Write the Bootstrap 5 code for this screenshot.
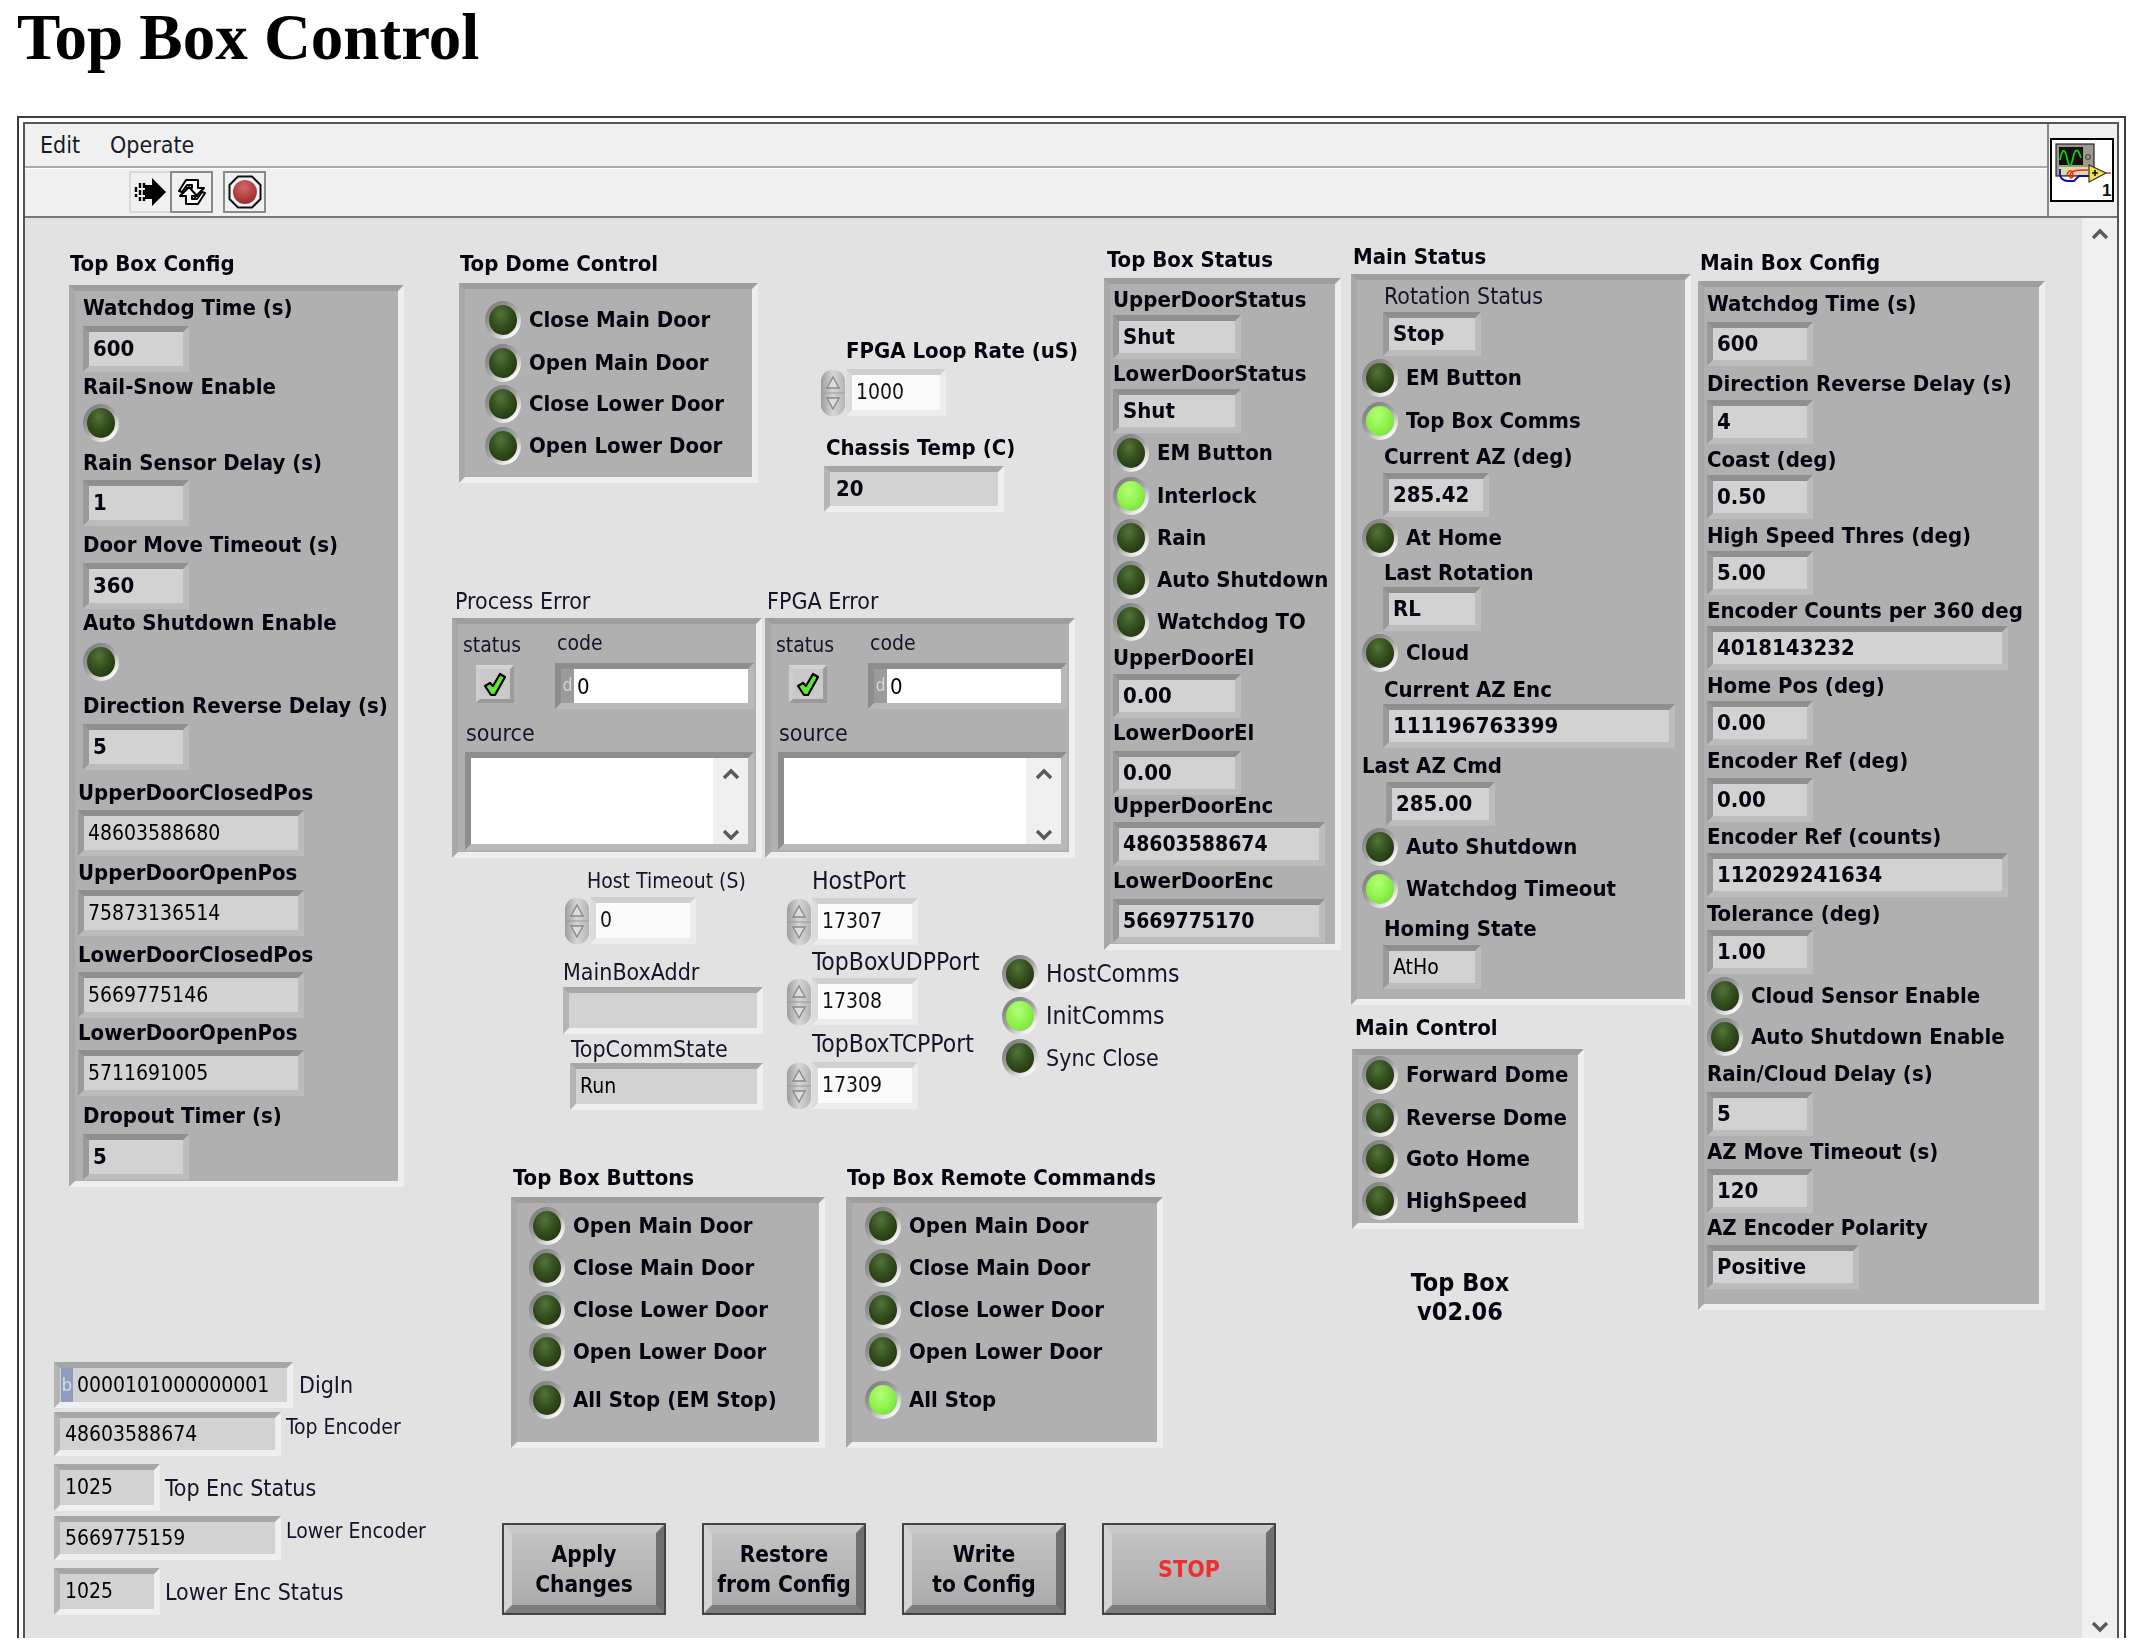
<!DOCTYPE html>
<html lang="en">
<head>
<meta charset="utf-8">
<title>Top Box Control</title>
<link rel="stylesheet" href="https://cdn.jsdelivr.net/npm/bootstrap@5.3.0/dist/css/bootstrap.min.css">
<style>
body{background:#fff;margin:0;width:2150px;height:1646px;overflow:hidden;font-family:"DejaVu Sans Condensed","DejaVu Sans",sans-serif;color:#000}
.page-title{font-family:"Liberation Serif",serif;font-weight:700;font-size:65px;line-height:70px;margin:0;padding:2px 0 0 17px;height:116px;color:#000}
.vi-frame{margin-left:17px;width:2109px;height:1522px;border:2px solid #3c3c3c;border-bottom:0;padding:4px 5px 0 4px}
.vi-inner{border:2px solid #555;border-bottom:0;height:100%;display:flex;flex-direction:column}
.vi-head{height:94px;flex:none;border-bottom:2px solid #777;background:#f0f0f0}
.vi-menu{height:44px;border-bottom:2px solid #aaa;box-shadow:0 1px 0 #fff;padding-left:15px;font-size:23px;gap:30px;align-items:center}
.vi-menu .nav-link{color:#1a1a2a;padding:0;line-height:26px}
.vi-tools{padding:3px 0 0 104px}
.tool-btn{width:43px;height:42px;padding:0;border:2px solid #8a8a8a;border-radius:0;background:#f0f0f0;display:flex;align-items:center;justify-content:center}
.tool-run{border-color:#d8d8d8;border-right:0;width:41px}
.tool-stop{margin-left:10px}
.vi-icon-cell{width:70px;flex:none;border-left:2px solid #888;padding:14px 0 0 1px}
.vi-icon{display:block;width:64px;height:64px;background:#fff;border:2px solid #000}
.canvas{position:relative;flex:1 1 auto;background:#e2e2e2;filter:blur(.45px)}
.vi-scroll{width:35px;flex:none;background:#f0f0f0;padding:10px 0 5px;align-items:center}
.obj{position:absolute}
.lb,.lr{height:26px;line-height:26px;white-space:nowrap}
.lb{font-weight:700;color:#05050f;font-size:22px}
.lr{font-weight:400;color:#14142a;font-size:23px}
.lr-x{font-size:24.5px}
.lr-s{font-size:21px}
.lp{border-style:solid;border-width:6px;border-color:#9e9e9e #eee #eee #a8a8a8;background:#b0b0b0;box-sizing:border-box}
.fld{height:44px;box-sizing:border-box;border-style:solid;border-width:6px;border-color:#8f8f8f #bcbcbc #bcbcbc #9a9a9a;background:#d2d2d2;display:flex;align-items:center;padding-left:4px;font-size:21px;line-height:1;white-space:nowrap;overflow:hidden}
.fld.on-bg{border-color:#a6a6a6 #efefef #efefef #b4b4b4}
.fb{font-weight:700;font-size:22px;color:#05050f}
.fn{font-size:21px}
.w98{width:98px}.w106{width:106px}.w109{width:109px}.w128{width:128px}.w152{width:152px}.w212{width:212px}.w226{width:226px}.w200{width:200px}.w193{width:193px}.w180{width:180px}.w239{width:239px}.w227{width:227px}.w292{width:292px}.w301{width:301px}
.tall{height:46px}.h47{height:47px}
.led{display:block;flex:none;width:36px;height:38px;border-radius:50%;border:4px solid transparent;background:radial-gradient(ellipse at 42% 30%,#54743a 0,#35521f 40%,#23360f 80%,#1c2a0e 100%) padding-box,linear-gradient(140deg,#858585 20%,#a5a5a5 50%,#fbfbfb 85%) border-box}
.led.lit{background:radial-gradient(ellipse at 42% 30%,#b4ff78 0,#8ef24a 50%,#6fd038 100%) padding-box,linear-gradient(140deg,#858585 20%,#a5a5a5 50%,#fbfbfb 85%) border-box}
.led-row{display:flex;align-items:center;gap:8px;height:38px}
.t0{margin-top:0}.t1{margin-top:1px}.t2{margin-top:2px}.t3{margin-top:3px}.t4{margin-top:4px}.t5{margin-top:5px}.t6{margin-top:6px}.t7{margin-top:7px}.t8{margin-top:8px}.t10{margin-top:10px}.t11{margin-top:11px}.t12{margin-top:12px}.tm2{margin-top:-2px}
.pos-tbc{left:44px;top:33px}.pan-tbc{width:335px;height:902px;padding-left:8px}
.tbc-wide{margin-left:-5px}
.pos-dome{left:434px;top:33px}.pan-dome{width:299px;height:200px;padding-left:20px}
.pos-tbs{left:1079px;top:29px}.pan-tbs{width:237px;height:672px;padding-left:3px}
.pos-ms{left:1326px;top:26px}.pan-ms{width:340px;height:731px;padding-left:5px}
.pos-mb{left:1673px;top:32px}.pan-mb{width:347px;height:1029px;padding-left:3px}
.pos-mc{left:1327px;top:797px}.pan-mc{width:232px;height:180px;padding-left:4px}
.pos-bt{left:486px;top:947px}.pos-rc{left:821px;top:947px}.pan-bt{width:314px;height:251px;padding-left:12px}.pan-rc{width:317px;height:251px;padding-left:13px}
.pos-pe{left:427px;top:370px}.pos-fe{left:740px;top:370px}.pan-err{width:310px;height:240px}
.pos-loop{left:795px;top:120px}.pos-chassis{left:799px;top:217px}.pos-host{left:539px;top:650px}.pos-ports{left:761px;top:650px}.pos-addr{left:538px;top:741px}.pos-comm{left:977px;top:737px}.pos-ver{left:1335px;top:1050px;width:200px}.pos-dig{left:29px;top:1144px}.pos-btns{left:477px;top:1305px}
.i21{margin-left:21px}.i22{margin-left:22px}.i24{margin-left:24px}.i26{margin-left:26px}.i23{margin-left:23px}.i7{margin-left:7px}.i8{margin-left:8px}.i1{margin-left:1px}.i2{margin-left:2px}.i3{margin-left:3px}.i5{margin-left:5px}.i13{margin-left:13px}
.pd{padding-left:6px}
.spin{display:block;flex:none;width:26px;height:48px}
.ctl{background:#fafafa;border-color:#cfcfcf #ececec #ececec #dcdcdc;color:#111;font-size:21px;width:106px;height:47px}
.ctl-wide{width:100px}
.err-col{width:97px;padding-left:5px}
.err-btn{width:38px;height:38px;border:4px solid;border-color:#d4d4d4 #9c9c9c #9a9a9a #cdcdcd;background:#c9c9c9;display:flex;align-items:center;justify-content:center}
.err-code{width:199px;height:46px;border-style:solid;border-width:6px;border-color:#8d8d8d #b9b9b9 #b9b9b9 #8d8d8d;display:flex;background:#fff;box-sizing:border-box;font-size:22px;align-items:center}
.radix{width:13px;height:100%;background:#9b9b9b;color:#d6d6d6;font-size:17px;display:flex;align-items:center;justify-content:center;margin-right:3px}
.err-src{width:289px;height:98px;border-style:solid;border-width:6px;border-color:#8d8d8d #b9b9b9 #b9b9b9 #8d8d8d;background:#fff;display:flex;justify-content:flex-end;box-sizing:border-box}
.err-bar{width:35px;background:#f0f0f0;padding:10px 0 3px;align-items:center}
.hl-b{background:#8c9dbf;color:#d8dde8;width:12px;height:100%;display:flex;align-items:center;justify-content:center;font-size:18px;margin-right:4px;margin-left:-4px}
.dig .fld{padding-left:5px}
.fh48{height:47px}
.lv-btn{--bs-btn-padding-x:0;--bs-btn-padding-y:0;height:92px;width:164px;border-radius:0;outline:2px solid #444;outline-offset:-2px;border:10px solid;border-color:#c9c9c9 #6f6f6f #7c7c7c #d3d3d3;background:linear-gradient(#c2c2c2,#acacac);font-family:inherit;font-weight:700;font-size:22.5px;line-height:30px;color:#05050f;display:flex;align-items:center;justify-content:center;text-align:center}
.lv-stop{width:174px;color:#ee2f2f;font-size:23px}
.gap-btns{gap:36px}
.ver-txt{font-weight:700;font-size:25px;line-height:29px;text-align:center;color:#05050f}
.sprite{position:absolute;width:0;height:0}
</style>
</head>
<body>
<svg class="sprite" aria-hidden="true">
<defs>
<linearGradient id="spg" x1="0" x2="1" y1="0" y2="0"><stop offset="0" stop-color="#9c9c9c"/><stop offset=".5" stop-color="#d6d6d6"/><stop offset="1" stop-color="#b4b4b4"/></linearGradient>
<symbol id="spinner" viewBox="0 0 26 48"><rect x="1" y="1" width="24" height="46" rx="11" fill="url(#spg)"/><path d="M1 24h24" stroke="#9a9a9a" stroke-width="1"/><path d="M13 8l6 11H7z" fill="#dcdcdc" stroke="#8a8a8a" stroke-width="1.4"/><path d="M13 40l6-11H7z" fill="#dcdcdc" stroke="#8a8a8a" stroke-width="1.4"/></symbol>
<symbol id="check" viewBox="0 0 24 26"><path d="M2 15l5-3 3 3 7-12 5 3-10 18H8z" fill="#5fe83a" stroke="#000" stroke-width="2.2" stroke-linejoin="round"/></symbol>
<symbol id="up" viewBox="0 0 18 12"><path d="M2 10l7-7 7 7" fill="none" stroke="#5a5a5a" stroke-width="3.4"/></symbol>
<symbol id="down" viewBox="0 0 18 12"><path d="M2 2l7 7 7-7" fill="none" stroke="#5a5a5a" stroke-width="3.4"/></symbol>
</defs>
</svg>

<h1 class="page-title">Top Box Control</h1>

<div class="vi-frame">
<div class="vi-inner">
  <div class="vi-head d-flex">
    <div class="flex-grow-1">
      <nav class="nav vi-menu"><a class="nav-link" href="#">Edit</a><a class="nav-link" href="#">Operate</a></nav>
      <div class="vi-tools d-flex">
        <button class="btn tool-btn tool-run" type="button" aria-label="Run"><svg width="33" height="30" viewBox="0 0 33 30"><path d="M2 10v10M6 6v18M10 6v18" stroke="#000" stroke-width="2.4" stroke-dasharray="5 2"/><path d="M11 8h7V1l14 14-14 14v-7h-7z" fill="#000"/></svg></button>
        <button class="btn tool-btn" type="button" aria-label="Run continuously"><svg width="34" height="32" viewBox="0 0 34 32"><path d="M4 15L11 4h12v8h6l-9 9-8-9h5V9h-5l-5 7z" fill="#fff" stroke="#000" stroke-width="2" stroke-linejoin="round"/><path d="M30 17l-7 11H11v-8H5l9-9 8 9h-5v3h5l5-7z" fill="#fff" stroke="#000" stroke-width="2" stroke-linejoin="round"/></svg></button>
        <button class="btn tool-btn tool-stop" type="button" aria-label="Abort"><svg width="34" height="34" viewBox="0 0 34 34"><defs><radialGradient id="stg" cx=".45" cy=".3" r=".8"><stop offset="0" stop-color="#d06a6a"/><stop offset=".6" stop-color="#b03c3c"/><stop offset="1" stop-color="#8c2626"/></radialGradient></defs><path d="M10 1.5h14l8.500 8.500v14l-8.500 8.500H10l-8.500-8.500V10z" fill="#f5f5f5" stroke="#111" stroke-width="2"/><circle cx="17" cy="17" r="12" fill="url(#stg)"/></svg></button>
      </div>
    </div>
    <div class="vi-icon-cell">
      <svg class="vi-icon" viewBox="0 0 60 60" role="img" aria-label="VI icon">
        <rect x="4" y="4" width="38" height="32" fill="#9b9b8c" stroke="#222" stroke-width="1.2"/>
        <rect x="7" y="7" width="24" height="18" fill="#111"/>
        <path d="M8 20c2-12 5-12 7-2s4 10 6 0 5-10 8 0" fill="none" stroke="#17c417" stroke-width="1.8"/>
        <circle cx="36" cy="17" r="2.4" fill="none" stroke="#554" stroke-width="1.2"/>
        <rect x="7" y="27" width="30" height="8" fill="#d9d9aa"/>
        <path d="M8 29v6q1 5 7 6h7l5-5h11" fill="none" stroke="#1010a8" stroke-width="1.8"/>
        <path d="M15 35c2-7 6-4 6 0s-4 4-3 0 4-5 18-5" fill="none" stroke="#ee2a1a" stroke-width="1.5"/>
        <path d="M37 25v17l17-9z" fill="#f0e442" stroke="#333" stroke-width="1.2"/>
        <path d="M40 33h6M43 30v6" stroke="#111" stroke-width="1.6"/>
        <path d="M54 33h5" stroke="#ee2a1a" stroke-width="1.5"/>
        <text x="50" y="56" font-family="Liberation Sans,sans-serif" font-size="17" font-weight="700" fill="#111">1</text>
      </svg>
    </div>
  </div>
  <div class="d-flex flex-grow-1">
    <div class="canvas">

      <div class="obj pos-tbc">
        <div class="lb i1">Top Box Config</div>
        <div class="lp pan-tbc t8">
          <div class="lb t4">Watchdog Time (s)</div>
          <div class="fld fb w106 tall t5">600</div>
          <div class="lb t2">Rail-Snow Enable</div>
          <span class="led t4"></span>
          <div class="lb t8">Rain Sensor Delay (s)</div>
          <div class="fld fb w106 tall t4">1</div>
          <div class="lb t6">Door Move Timeout (s)</div>
          <div class="fld fb w106 tall t5">360</div>
          <div class="lb t1">Auto Shutdown Enable</div>
          <span class="led t7"></span>
          <div class="lb t12">Direction Reverse Delay (s)</div>
          <div class="fld fb w106 tall t5">5</div>
          <div class="lb tbc-wide t10">UpperDoorClosedPos</div>
          <div class="fld w226 tall tbc-wide t4">48603588680</div>
          <div class="lb tbc-wide t4">UpperDoorOpenPos</div>
          <div class="fld w226 tall tbc-wide t4">75873136514</div>
          <div class="lb tbc-wide t6">LowerDoorClosedPos</div>
          <div class="fld w226 tall tbc-wide t4">5669775146</div>
          <div class="lb tbc-wide t2">LowerDoorOpenPos</div>
          <div class="fld w226 tall tbc-wide t4">5711691005</div>
          <div class="lb t7">Dropout Timer (s)</div>
          <div class="fld fb w106 tall t5">5</div>
        </div>
      </div>

      <div class="obj pos-dome">
        <div class="lb i1">Top Dome Control</div>
        <div class="lp pan-dome t6">
          <div class="led-row lb t12"><span class="led"></span>Close Main Door</div>
          <div class="led-row lb t5"><span class="led"></span>Open Main Door</div>
          <div class="led-row lb t3"><span class="led"></span>Close Lower Door</div>
          <div class="led-row lb t4"><span class="led"></span>Open Lower Door</div>
        </div>
      </div>

      <div class="obj pos-loop">
        <div class="lb i26">FPGA Loop Rate (uS)</div>
        <div class="d-flex t5"><svg class="spin"><use href="#spinner"/></svg><div class="fld ctl ctl-wide">1000</div></div>
      </div>

      <div class="obj pos-chassis">
        <div class="lb i2">Chassis Temp (C)</div>
        <div class="fld fb on-bg w180 tall t5 pd">20</div>
      </div>

      <div class="obj pos-pe">
        <div class="lr i3">Process Error</div>
        <div class="lp pan-err t4">
          <div class="d-flex">
            <div class="err-col">
              <div class="lr lr-s t8">status</div>
              <div class="err-btn i13 t7"><svg width="24" height="26"><use href="#check"/></svg></div>
            </div>
            <div>
              <div class="lr lr-s t6 i2">code</div>
              <div class="err-code t7"><span class="radix">d</span>0</div>
            </div>
          </div>
          <div class="lr i8 t11">source</div>
          <div class="err-src i7 t6"><div class="err-bar d-flex flex-column justify-content-between"><svg width="18" height="12"><use href="#up"/></svg><svg width="18" height="12"><use href="#down"/></svg></div></div>
        </div>
      </div>

      <div class="obj pos-fe">
        <div class="lr i2">FPGA Error</div>
        <div class="lp pan-err t4">
          <div class="d-flex">
            <div class="err-col">
              <div class="lr lr-s t8">status</div>
              <div class="err-btn i13 t7"><svg width="24" height="26"><use href="#check"/></svg></div>
            </div>
            <div>
              <div class="lr lr-s t6 i2">code</div>
              <div class="err-code t7"><span class="radix">d</span>0</div>
            </div>
          </div>
          <div class="lr i8 t11">source</div>
          <div class="err-src i7 t6"><div class="err-bar d-flex flex-column justify-content-between"><svg width="18" height="12"><use href="#up"/></svg><svg width="18" height="12"><use href="#down"/></svg></div></div>
        </div>
      </div>

      <div class="obj pos-host">
        <div class="lr lr-s i23">Host Timeout (S)</div>
        <div class="d-flex t3"><svg class="spin"><use href="#spinner"/></svg><div class="fld ctl">0</div></div>
      </div>

      <div class="obj pos-ports">
        <div class="lr lr-x i26">HostPort</div>
        <div class="d-flex t4"><svg class="spin"><use href="#spinner"/></svg><div class="fld ctl">17307</div></div>
        <div class="lr lr-x i26 t3">TopBoxUDPPort</div>
        <div class="d-flex t3"><svg class="spin"><use href="#spinner"/></svg><div class="fld ctl">17308</div></div>
        <div class="lr lr-x i26 t5">TopBoxTCPPort</div>
        <div class="d-flex t5"><svg class="spin"><use href="#spinner"/></svg><div class="fld ctl">17309</div></div>
      </div>

      <div class="obj pos-addr">
        <div class="lr">MainBoxAddr</div>
        <div class="fld on-bg w200 h47 t2"></div>
        <div class="lr i8 t2">TopCommState</div>
        <div class="fld on-bg w193 h47 t1 i7">Run</div>
      </div>

      <div class="obj pos-comm">
        <div class="led-row lr lr-x"><span class="led"></span>HostComms</div>
        <div class="led-row lr lr-x t4"><span class="led lit"></span>InitComms</div>
        <div class="led-row lr t4"><span class="led"></span>Sync Close</div>
      </div>

      <div class="obj pos-tbs">
        <div class="lb i3">Top Box Status</div>
        <div class="lp pan-tbs t5">
          <div class="lb t3">UpperDoorStatus</div>
          <div class="fld fb w128 t2">Shut</div>
          <div class="lb t2">LowerDoorStatus</div>
          <div class="fld fb w128 t2">Shut</div>
          <div class="led-row lb t1"><span class="led"></span>EM Button</div>
          <div class="led-row lb t5"><span class="led lit"></span>Interlock</div>
          <div class="led-row lb t4"><span class="led"></span>Rain</div>
          <div class="led-row lb t4"><span class="led"></span>Auto Shutdown</div>
          <div class="led-row lb t4"><span class="led"></span>Watchdog TO</div>
          <div class="lb t4">UpperDoorEl</div>
          <div class="fld fb w128 t3">0.00</div>
          <div class="lb t2">LowerDoorEl</div>
          <div class="fld fb w128 t5">0.00</div>
          <div class="lb tm2">UpperDoorEnc</div>
          <div class="fld fb fn w212 t3">48603588674</div>
          <div class="lb t2">LowerDoorEnc</div>
          <div class="fld fb fn w212 t5">5669775170</div>
        </div>
      </div>

      <div class="obj pos-ms">
        <div class="lb i2">Main Status</div>
        <div class="lp pan-ms t4">
          <div class="lr i22 t3">Rotation Status</div>
          <div class="fld fb w98 i21 t3">Stop</div>
          <div class="led-row lb t3"><span class="led"></span>EM Button</div>
          <div class="led-row lb t5"><span class="led lit"></span>Top Box Comms</div>
          <div class="lb i22 t4">Current AZ (deg)</div>
          <div class="fld fb w106 i21 t3">285.42</div>
          <div class="led-row lb t2"><span class="led"></span>At Home</div>
          <div class="lb i22 t3">Last Rotation</div>
          <div class="fld fb w98 i21 t1">RL</div>
          <div class="led-row lb t3"><span class="led"></span>Cloud</div>
          <div class="lb i22 t5">Current AZ Enc</div>
          <div class="fld fb w292 i21 t1">111196763399</div>
          <div class="lb t5">Last AZ Cmd</div>
          <div class="fld fb w109 i24 t3">285.00</div>
          <div class="led-row lb t2"><span class="led"></span>Auto Shutdown</div>
          <div class="led-row lb t4"><span class="led lit"></span>Watchdog Timeout</div>
          <div class="lb i22 t8">Homing State</div>
          <div class="fld w98 i21 t3">AtHo</div>
        </div>
      </div>

      <div class="obj pos-mc">
        <div class="lb i3">Main Control</div>
        <div class="lp pan-mc t8">
          <div class="led-row lb t1"><span class="led"></span>Forward Dome</div>
          <div class="led-row lb t5"><span class="led"></span>Reverse Dome</div>
          <div class="led-row lb t3"><span class="led"></span>Goto Home</div>
          <div class="led-row lb t4"><span class="led"></span>HighSpeed</div>
        </div>
      </div>

      <div class="obj pos-ver"><div class="ver-txt">Top Box<br>v02.06</div></div>

      <div class="obj pos-mb">
        <div class="lb i2">Main Box Config</div>
        <div class="lp pan-mb t5">
          <div class="lb t4">Watchdog Time (s)</div>
          <div class="fld fb w106 t5">600</div>
          <div class="lb t5">Direction Reverse Delay (s)</div>
          <div class="fld fb w106 t3">4</div>
          <div class="lb t3">Coast (deg)</div>
          <div class="fld fb w106 t2">0.50</div>
          <div class="lb t4">High Speed Thres (deg)</div>
          <div class="fld fb w106 t2">5.00</div>
          <div class="lb t3">Encoder Counts per 360 deg</div>
          <div class="fld fb w301 t2">4018143232</div>
          <div class="lb t3">Home Pos (deg)</div>
          <div class="fld fb w106 t2">0.00</div>
          <div class="lb t3">Encoder Ref (deg)</div>
          <div class="fld fb w106 t4">0.00</div>
          <div class="lb t2">Encoder Ref (counts)</div>
          <div class="fld fb w301 t3">112029241634</div>
          <div class="lb t4">Tolerance (deg)</div>
          <div class="fld fb w106 t3">1.00</div>
          <div class="led-row lb t3"><span class="led"></span>Cloud Sensor Enable</div>
          <div class="led-row lb t3"><span class="led"></span>Auto Shutdown Enable</div>
          <div class="lb t5">Rain/Cloud Delay (s)</div>
          <div class="fld fb w106 t5">5</div>
          <div class="lb t3">AZ Move Timeout (s)</div>
          <div class="fld fb w106 t4">120</div>
          <div class="lb t2">AZ Encoder Polarity</div>
          <div class="fld fb w152 t4">Positive</div>
        </div>
      </div>

      <div class="obj pos-bt">
        <div class="lb i2">Top Box Buttons</div>
        <div class="lp pan-bt t6">
          <div class="led-row lb t4"><span class="led"></span>Open Main Door</div>
          <div class="led-row lb t4"><span class="led"></span>Close Main Door</div>
          <div class="led-row lb t4"><span class="led"></span>Close Lower Door</div>
          <div class="led-row lb t4"><span class="led"></span>Open Lower Door</div>
          <div class="led-row lb t10"><span class="led"></span>All Stop (EM Stop)</div>
        </div>
      </div>

      <div class="obj pos-rc">
        <div class="lb i1">Top Box Remote Commands</div>
        <div class="lp pan-rc t6">
          <div class="led-row lb t4"><span class="led"></span>Open Main Door</div>
          <div class="led-row lb t4"><span class="led"></span>Close Main Door</div>
          <div class="led-row lb t4"><span class="led"></span>Close Lower Door</div>
          <div class="led-row lb t4"><span class="led"></span>Open Lower Door</div>
          <div class="led-row lb t10"><span class="led lit"></span>All Stop</div>
        </div>
      </div>

      <div class="obj pos-dig dig">
        <div class="d-flex align-items-center gap-1"><div class="fld on-bg w239 tall"><span class="hl-b">b</span>0000101000000001</div><div class="lr i2">DigIn</div></div>
        <div class="d-flex t4"><div class="fld on-bg w227">48603588674</div><div class="lr lr-s i5 t2">Top Encoder</div></div>
        <div class="d-flex align-items-center t8"><div class="fld on-bg w106 fh48">1025</div><div class="lr i5">Top Enc Status</div></div>
        <div class="d-flex t5"><div class="fld on-bg w227">5669775159</div><div class="lr lr-s i5 t2">Lower Encoder</div></div>
        <div class="d-flex align-items-center t8"><div class="fld on-bg w106 fh48">1025</div><div class="lr i5">Lower Enc Status</div></div>
      </div>

      <div class="obj pos-btns d-flex gap-btns">
        <button class="btn lv-btn" type="button">Apply<br>Changes</button>
        <button class="btn lv-btn" type="button">Restore<br>from Config</button>
        <button class="btn lv-btn" type="button">Write<br>to Config</button>
        <button class="btn lv-btn lv-stop" type="button">STOP</button>
      </div>

    </div>
    <div class="vi-scroll d-flex flex-column justify-content-between">
      <svg width="18" height="12"><use href="#up"/></svg>
      <svg width="18" height="12"><use href="#down"/></svg>
    </div>
  </div>
</div>
</div>
<script src="https://cdn.jsdelivr.net/npm/bootstrap@5.3.0/dist/js/bootstrap.bundle.min.js"></script>
</body>
</html>
